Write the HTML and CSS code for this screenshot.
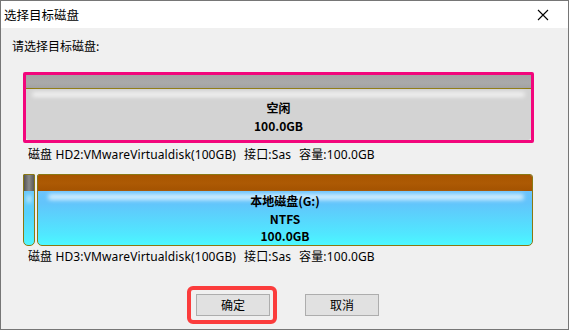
FILE: index.html
```html
<!DOCTYPE html>
<html>
<head>
<meta charset="utf-8">
<link rel="stylesheet" href="styles.css">
</head>
<body>
<div class="window">
  <div class="titlebar">
    <span class="title">选择目标磁盘</span>
    <svg class="close" width="12" height="12" viewBox="0 0 12 12"><path d="M1 1 L11 11 M11 1 L1 11" stroke="#000" stroke-width="1.1" fill="none"/></svg>
  </div>
  <div class="content">
    <div class="prompt">请选择目标磁盘:</div>
    <div class="disk selected">
      <div class="part free">
        <div class="bar"></div>
        <div class="fill">
          <div class="gloss"></div>
          <div class="ptext">空闲</div>
          <div class="ptext">100.0GB</div>
        </div>
      </div>
    </div>
    <div class="info"><span>磁盘 HD2:VMwareVirtualdisk(100GB)</span><span class="gap">接口:Sas</span><span class="gap">容量:100.0GB</span></div>
    <div class="disk plain">
      <div class="part small">
        <div class="bar"></div>
        <div class="fill"><div class="gloss"></div></div>
      </div>
      <div class="part ntfs">
        <div class="bar"></div>
        <div class="fill">
          <div class="gloss"></div>
          <div class="ptext">本地磁盘(G:)</div>
          <div class="ptext">NTFS</div>
          <div class="ptext">100.0GB</div>
        </div>
      </div>
    </div>
    <div class="info"><span>磁盘 HD3:VMwareVirtualdisk(100GB)</span><span class="gap">接口:Sas</span><span class="gap">容量:100.0GB</span></div>
    <div class="buttons">
      <span class="ring"><button class="btn">确定</button></span>
      <button class="btn">取消</button>
    </div>
  </div>
</div>
</body>
</html>
```
FILE: styles.css
```css
* { box-sizing: border-box; }
html, body { margin: 0; padding: 0; background: #ffffff; }
body {
  font-family: "Noto Sans CJK SC", "Noto Sans", sans-serif;
  font-size: 12px;
  color: #000;
}
.window {
  width: 569px;
  height: 330px;
  border: 1px solid #767676;
  background: #f0f0f0;
  display: flex;
  flex-direction: column;
}
.titlebar {
  height: 27px;
  background: #ffffff;
  display: flex;
  align-items: center;
  justify-content: space-between;
  padding: 0 19px 0 3px;
  flex: none;
}
.title { font-size: 12.5px; line-height: 16px; }
.close { display: block; }
.content {
  padding: 10px 0 0 11px;
  display: flex;
  flex-direction: column;
}
.prompt { line-height: 16px; font-size: 12px; }
.disk {
  display: flex;
  margin-left: 11px;
  width: 511px;
}
.selected {
  margin-top: 18px;
  height: 71px;
  border: 3px solid #f2067c;
  border-radius: 2px;
}
.plain {
  margin-top: 11px;
  height: 72px;
  gap: 2px;
  width: 510px;
}
.part {
  display: flex;
  flex-direction: column;
  overflow: hidden;
}
.free { flex: 1; background: #d3d3d3; border-radius: 0 0 3px 3px; }
.free .bar {
  height: 14px;
  background: linear-gradient(#a4a4a4, #aaaaaa 60%, #a2a2a2);
  border-bottom: 1px solid #8f7a10;
  flex: none;
}
.fill {
  flex: 1;
  position: relative;
  display: flex;
  flex-direction: column;
  align-items: center;
  justify-content: center;
}
.free .fill { padding-top: 4px; }
.ptext {
  font-weight: bold;
  line-height: 18px;
  font-size: 12px;
  position: relative;
}
.gloss {
  position: absolute;
  left: 6px;
  right: 6px;
  top: 3px;
  height: 5px;
  border-radius: 3px;
  background: rgba(255,255,255,0.7);
  filter: blur(2px);
}
.small {
  width: 12px;
  flex: none;
  border: 1px solid #8a7812;
  border-radius: 1px 1px 5px 5px;
  background: linear-gradient(#76c0fb, #58d2fb 55%, #4ff6ff);
}
.small .bar {
  height: 16px;
  background: linear-gradient(90deg, #555, #8a8a8a 50%, #5a5a5a);
  flex: none;
}
.small .gloss { left: 3px; right: 3px; height: 8px; top: 4px; }
.ntfs {
  flex: 1;
  border: 1px solid #8a7812;
  border-radius: 2px 3px 5px 5px;
  background: linear-gradient(#7ac2fd, #62c4fb 40%, #50e8ff 85%, #4cf8ff);
}
.ntfs .bar {
  height: 16px;
  background: linear-gradient(#a95500, #ad5a04 50%, #a35200);
  flex: none;
}
.ntfs .fill { padding-top: 1px; }
.ntfs .ptext { line-height: 17.5px; }
.ntfs .gloss { top: 3px; height: 6px; left: 10px; right: 8px; }
.info {
  margin-top: 4px;
  margin-left: 16px;
  line-height: 16px;
  font-size: 12px;
  font-family: "Noto Sans", "Noto Sans CJK SC", sans-serif;
  white-space: nowrap;
  letter-spacing: 0.12px;
}
.info .gap { margin-left: 8px; }
.plain + .info { margin-top: 3px; }
.buttons {
  margin-top: 21px;
  display: flex;
  align-items: center;
  padding-left: 175px;
  gap: 28px;
}
.ring {
  display: block;
  border: 4px solid #fb3c3c;
  border-radius: 6px;
  padding: 4px 3px 4px 5px;
}
.btn {
  display: block;
  width: 74px;
  height: 22px;
  background: #e1e1e1;
  border: 1px solid #adadad;
  border-radius: 0;
  font-family: "Noto Sans CJK SC", sans-serif;
  font-size: 12px;
  line-height: 18px;
  padding: 0;
  color: #000;
}
```
